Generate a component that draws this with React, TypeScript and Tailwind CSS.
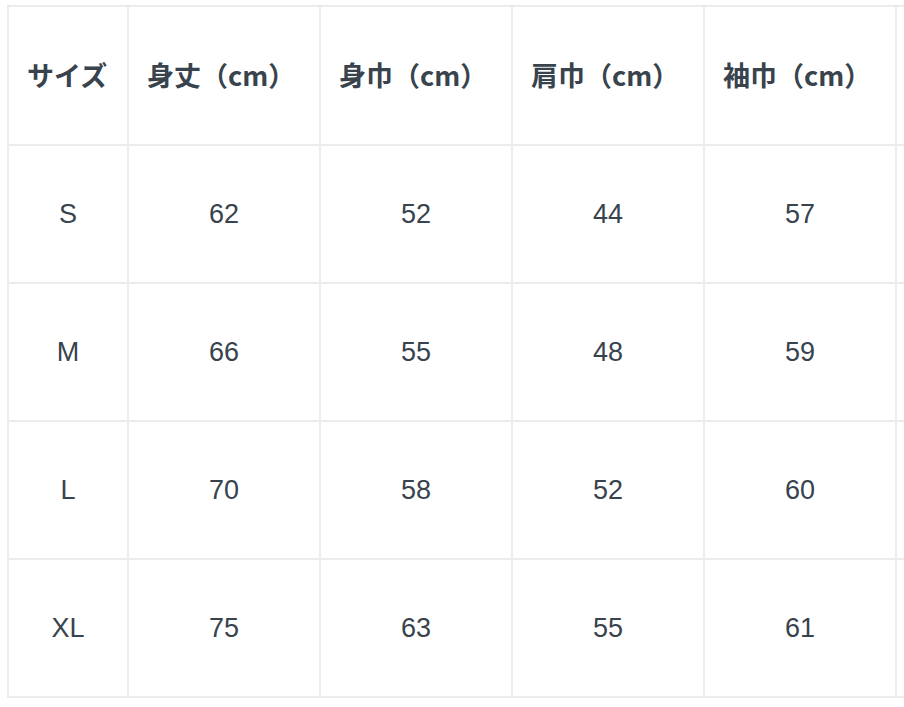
import React from "react";

const HEADERS = ["サイズ", "身丈（cm）", "身巾（cm）", "肩巾（cm）", "袖巾（cm）"];

const ROWS: [string, number, number, number, number][] = [
  ["S", 62, 52, 44, 57],
  ["M", 66, 55, 48, 59],
  ["L", 70, 58, 52, 60],
  ["XL", 75, 63, 55, 61],
];

const FONT = '"Liberation Sans", "Noto Sans CJK JP", sans-serif';

export default function App() {
  return (
    <div className="w-[904px] h-[707px] overflow-hidden bg-white">
      <div className="pl-[7px] pt-[5px] w-[1200px]">
        <table
          className="w-[1082px] border-collapse table-fixed text-[#38434d]"
          style={{ fontFamily: FONT }}
        >
          <colgroup>
            <col className="w-[120px]" />
            <col className="w-[192px]" />
            <col className="w-[192px]" />
            <col className="w-[192px]" />
            <col className="w-[192px]" />
            <col className="w-[194px]" />
          </colgroup>
          <thead>
            <tr>
              {HEADERS.map((h) => (
                <th
                  key={h}
                  className="h-[139px] border-2 border-[#ececec] px-[18px] text-left text-[27px] font-bold whitespace-nowrap"
                  style={{ fontFamily: '"Noto Sans CJK JP", sans-serif' }}
                >
                  {h}
                </th>
              ))}
              <th className="h-[139px] border-2 border-[#ececec]" />
            </tr>
          </thead>
          <tbody>
            {ROWS.map((row) => (
              <tr key={row[0]}>
                {row.map((v, i) => (
                  <td
                    key={i}
                    className="h-[138px] border-2 border-[#ececec] text-center text-[27px] font-normal"
                  >
                    {v}
                  </td>
                ))}
                <td className="h-[138px] border-2 border-[#ececec]" />
              </tr>
            ))}
          </tbody>
        </table>
      </div>
    </div>
  );
}
